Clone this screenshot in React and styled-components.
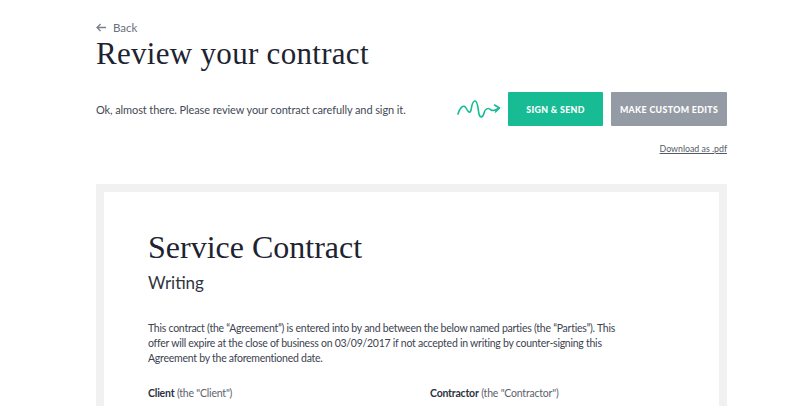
import React from 'react';
import styled, { createGlobalStyle } from 'styled-components';

const GlobalStyle = createGlobalStyle`
	html, body {
		margin: 0;
		padding: 0;
		background: #ffffff;
	}
	body {
		font-family: Lato, 'Liberation Sans', sans-serif;
		color: #3d4350;
	}
`;

const Page = styled.div`
	width: 631px;
	margin-left: 96px;
	padding-top: 16px;
`;

const BackLink = styled.a`
	display: inline-flex;
	align-items: center;
	gap: 6px;
	font-size: 11.5px;
	color: #6b717c;
	text-decoration: none;
	cursor: pointer;

	> svg {
		display: block;
	}
`;

const Title = styled.h1`
	margin: 1px 0 0;
	font-family: 'Liberation Serif', serif;
	font-weight: 400;
	font-size: 31px;
	line-height: 36px;
	color: #1d2330;
	letter-spacing: 0.3px;
`;

const ActionRow = styled.div`
	display: flex;
	align-items: center;
	margin-top: 20px;
`;

const Intro = styled.p`
	margin: 0;
	flex: 1;
	font-size: 11px;
	letter-spacing: -0.1px;
	color: #444a56;
	white-space: nowrap;
`;

const Squiggle = styled.svg`
	display: block;
	margin-right: 6px;
`;

const Button = styled.button`
	width: ${p => p.width}px;
	height: 34px;
	padding: 0;
	border: none;
	border-radius: 1px;
	background: ${p => (p.primary ? '#17bc94' : '#959ba4')};
	color: #ffffff;
	font-family: Lato, 'Liberation Sans', sans-serif;
	font-weight: 900;
	font-size: 8.8px;
	letter-spacing: 0.35px;
	text-transform: uppercase;
	cursor: pointer;

	& + & {
		margin-left: 8px;
	}
`;

const DownloadRow = styled.div`
	display: flex;
	justify-content: flex-end;
	margin-top: 17px;
`;

const DownloadLink = styled.a`
	font-size: 8.8px;
	color: #555b66;
	text-decoration: underline;
	cursor: pointer;
`;

const Frame = styled.div`
	margin-top: 30px;
	background: #f1f1f1;
	padding: 8px 8px 0;
`;

const Paper = styled.div`
	background: #ffffff;
	padding: 37px 44px 40px;
	min-height: 240px;
`;

const DocTitle = styled.h2`
	margin: 0;
	font-family: 'Liberation Serif', serif;
	font-weight: 400;
	font-size: 32px;
	line-height: 36px;
	color: #1d2330;
`;

const DocSubtitle = styled.h3`
	margin: 7px 0 0;
	font-weight: 400;
	font-size: 17px;
	color: #2f3541;
`;

const Paragraph = styled.p`
	margin: 28px 0 0;
	font-size: 10.5px;
	letter-spacing: -0.25px;
	line-height: 15px;
	color: #3d4350;
	max-width: 472px;
`;

const Parties = styled.div`
	display: grid;
	grid-template-columns: 282px 1fr;
	margin-top: 21px;
	font-size: 10.5px;
	letter-spacing: -0.2px;
	color: #5c626d;
`;

const PartyLabel = styled.div`
	> strong {
		font-weight: 700;
		color: #2c323e;
	}
`;

const ArrowLeft = () => (
	<svg width="11" height="9" viewBox="0 0 11 9" fill="none">
		<path d="M10 4.5H1.2M4.6 1L1 4.5L4.6 8" stroke="#7a808a" strokeWidth="1.3" />
	</svg>
);

export default function App() {
	return (
		<>
			<GlobalStyle />
			<Page>
				<BackLink>
					<ArrowLeft />
					Back
				</BackLink>
				<Title>Review your contract</Title>

				<ActionRow>
					<Intro>Ok, almost there. Please review your contract carefully and sign it.</Intro>
					<Squiggle width="45" height="22" viewBox="0 0 45 22" fill="none">
						<path
							d="M1 16 C3 9, 7 6, 9 10 C11 14, 13 16, 14 12 C15 8, 15 3, 18 3 C21 3, 21 12, 22 16 C23 20, 26 20, 27 15 C28 11, 31 9, 34 12 C36 13, 38 13, 42 10"
							stroke="#17bc94"
							strokeWidth="1.6"
							strokeLinecap="round"
						/>
						<path d="M37.5 7 L42.5 10 L38.5 14" stroke="#17bc94" strokeWidth="1.6" strokeLinecap="round" strokeLinejoin="round" />
					</Squiggle>
					<Button primary width={95}>Sign &amp; Send</Button>
					<Button width={116}>Make custom edits</Button>
				</ActionRow>

				<DownloadRow>
					<DownloadLink>Download as .pdf</DownloadLink>
				</DownloadRow>

				<Frame>
					<Paper>
						<DocTitle>Service Contract</DocTitle>
						<DocSubtitle>Writing</DocSubtitle>
						<Paragraph>
							This contract (the “Agreement”) is entered into by and between the below named parties (the “Parties”). This offer will expire at the close of business on 03/09/2017 if not accepted in writing by counter-signing this Agreement by the aforementioned date.
						</Paragraph>
						<Parties>
							<PartyLabel>
								<strong>Client</strong> (the "Client")
							</PartyLabel>
							<PartyLabel>
								<strong>Contractor</strong> (the "Contractor")
							</PartyLabel>
						</Parties>
					</Paper>
				</Frame>
			</Page>
		</>
	);
}
